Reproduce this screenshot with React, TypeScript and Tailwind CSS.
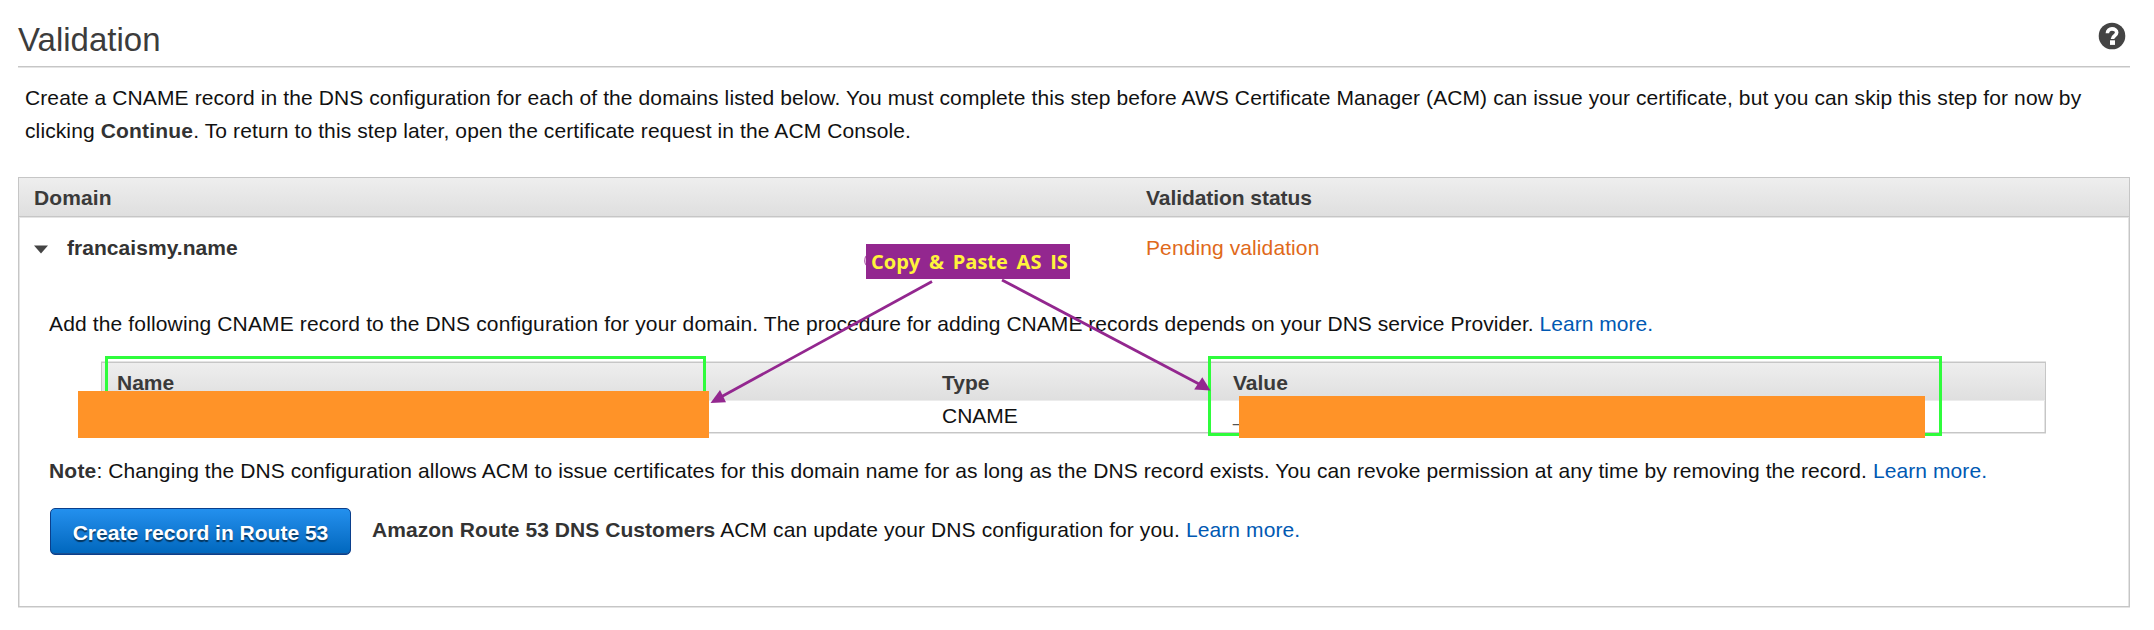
const link = "text-[#0059b3]";

function HelpIcon() {
  return (
    <svg className="h-[28px] w-[28px]" viewBox="0 0 28 28" aria-hidden="true">
      <circle cx="14" cy="14" r="13.3" fill="#444" />
      <path d="M9.4 11.2c0-2.8 2-4.3 4.6-4.3s4.7 1.4 4.7 3.7c0 3.4-4.2 2.8-4.2 6.4" fill="none" stroke="#fff" strokeWidth="3.6" />
      <rect x="12" y="18.3" width="5" height="4.6" fill="#fff" />
    </svg>
  );
}

function Annotations() {
  return (
    <>
      <div className="absolute left-[105px] top-[356px] h-[60px] w-[601px] border-[3px] border-[#2ffc3c]" />
      <div className="absolute left-[78px] top-[391px] h-[47px] w-[631px] bg-[#ff9328]" />
      <div className="absolute left-[1208px] top-[356px] h-[80px] w-[734px] border-[3px] border-[#2ffc3c]" />
      <div className="absolute left-[1239px] top-[396px] h-[42px] w-[686px] bg-[#ff9328]" />
      <svg className="absolute left-0 top-0 h-[630px] w-[2154px]" viewBox="0 0 2154 630" aria-hidden="true">
        <g stroke="#93278f" strokeWidth="2.8" fill="none">
          <path d="M932 281.5L720 397.5" />
          <path d="M1002 280L1200 384.5" />
          <path d="M866 256q-2.6 4.5 0 9" strokeWidth="1.2" strokeOpacity="0.7" />
        </g>
        <path d="M710.5 403L720 390L726 402.2Z" fill="#93278f" />
        <path d="M1210.5 390.5L1202.3 377.3L1194.2 389.6Z" fill="#93278f" />
      </svg>
      <div className="absolute left-[866px] top-[244px] flex h-[35px] w-[204px] items-center whitespace-nowrap bg-[#93278f] pl-[5px] font-['Open_Sans',sans-serif] text-[20px] font-bold text-[#fff33b] [word-spacing:3.6px]">
        Copy &amp; Paste AS IS
      </div>
    </>
  );
}

export default function App() {
  return (
    <main className="relative h-[630px] w-[2154px] overflow-hidden bg-white pl-[18px] pr-[24px] font-['Liberation_Sans',Arial,sans-serif] text-[21px] leading-[33px] text-[#111]">
      <header className="flex h-[67px] items-start justify-between border-b border-[#c6c6c6] pr-[4px] pt-[22px] shadow-[0_1px_0_#e4e4e4]">
        <h1 className="text-[33px] leading-[36px] text-[#3c3c3c]">Validation</h1>
        <HelpIcon />
      </header>
      <div className="h-[110px] whitespace-nowrap pl-[7px] pt-[14px] tracking-[0.105px]">
        <p>Create a CNAME record in the DNS configuration for each of the domains listed below. You must complete this step before AWS Certificate Manager (ACM) can issue your certificate, but you can skip this step for now by</p>
        <p>clicking <b className="tracking-[0.2px] text-[#333]">Continue</b>. To return to this step later, open the certificate request in the ACM Console.</p>
      </div>
      <section className="h-[430px] border border-[#c6c6c6] shadow-[0_1px_0_#e4e4e4,inset_1px_0_0_#e4e4e4,inset_-1px_0_0_#e4e4e4]">
        <div className="flex h-[39px] border-b border-[#c6c6c6] bg-linear-to-b from-[#eee] to-[#dfdfdf] pl-[15px] pt-[3px] font-bold text-[#3a3a3a] shadow-[0_1px_0_#e4e4e4]">
          <div className="w-[1112px] tracking-[0.1px]">Domain</div>
          <div className="tracking-[-0.06px]">Validation status</div>
        </div>
        <div className="flex h-[74px] items-start pl-[15px] pt-[14px]">
          <svg className="mt-[14px] h-[9px] w-[14px]" viewBox="0 0 14 9" aria-hidden="true"><path d="M0 0.5H14L7 8.5Z" fill="#444" /></svg>
          <div className="w-[1098px] pl-[19px] font-bold tracking-[0.05px] text-[#333]">francaismy.name</div>
          <div className="tracking-[0.1px] text-[#e0691a]">Pending validation</div>
        </div>
        <div className="whitespace-nowrap pl-[30px]">
          <p className="pt-[16px] tracking-[0.04px]"><span className="tracking-[0.14px]">Add the following CNAME record to the DNS configuration for your domain.</span> The procedure for adding CNAME records depends on your DNS service Provider. <span className={link}>Learn more.</span></p>
          <div className="ml-[52px] mt-[22px] h-[71px] w-[1945px] border border-[#c6c6c6] shadow-[0_1px_0_#e4e4e4,0_-1px_0_#e4e4e4,inset_-1px_0_0_#e4e4e4]">
            <div className="grid h-[38px] grid-cols-[825px_291px_1fr] border-b border-[#ececec] bg-linear-to-b from-[#eee] to-[#dfdfdf] pl-[15px] pt-[3px] font-bold text-[#3a3a3a]">
              <div>Name</div><div>Type</div><div>Value</div>
            </div>
            <div className="grid h-[31px] grid-cols-[825px_291px_1fr] pl-[15px]">
              <div /><div className="-mt-[2px]">CNAME</div><div className="-mt-[4px] text-[#555]">_</div>
            </div>
          </div>
          <p className="pt-[21px] tracking-[0.087px]"><b className="tracking-[0.2px] text-[#333]">Note</b>: Changing the DNS configuration allows ACM to issue certificates for this domain name for as long as the DNS record exists. You can revoke permission at any time by removing the record. <span className={link}>Learn more.</span></p>
          <div className="flex pl-px pt-[21px]">
            <button className="h-[47px] w-[301px] rounded-[5px] border border-[#0b3f8c] bg-linear-to-b from-[#2390ee] to-[#0067bd] pt-[1px] font-bold text-white shadow-[inset_0_-1px_0_#1a4f8f] [text-shadow:0_2px_1px_rgba(0,0,0,.55)]">Create record in Route 53</button>
            <p className="pl-[21px] pt-[5px]"><b className="tracking-[0.05px] text-[#333]">Amazon Route 53 DNS Customers</b><span className="tracking-[0.1px]"> ACM can update your DNS configuration for you. <span className={link}>Learn more.</span></span></p>
          </div>
        </div>
      </section>
      <Annotations />
    </main>
  );
}
